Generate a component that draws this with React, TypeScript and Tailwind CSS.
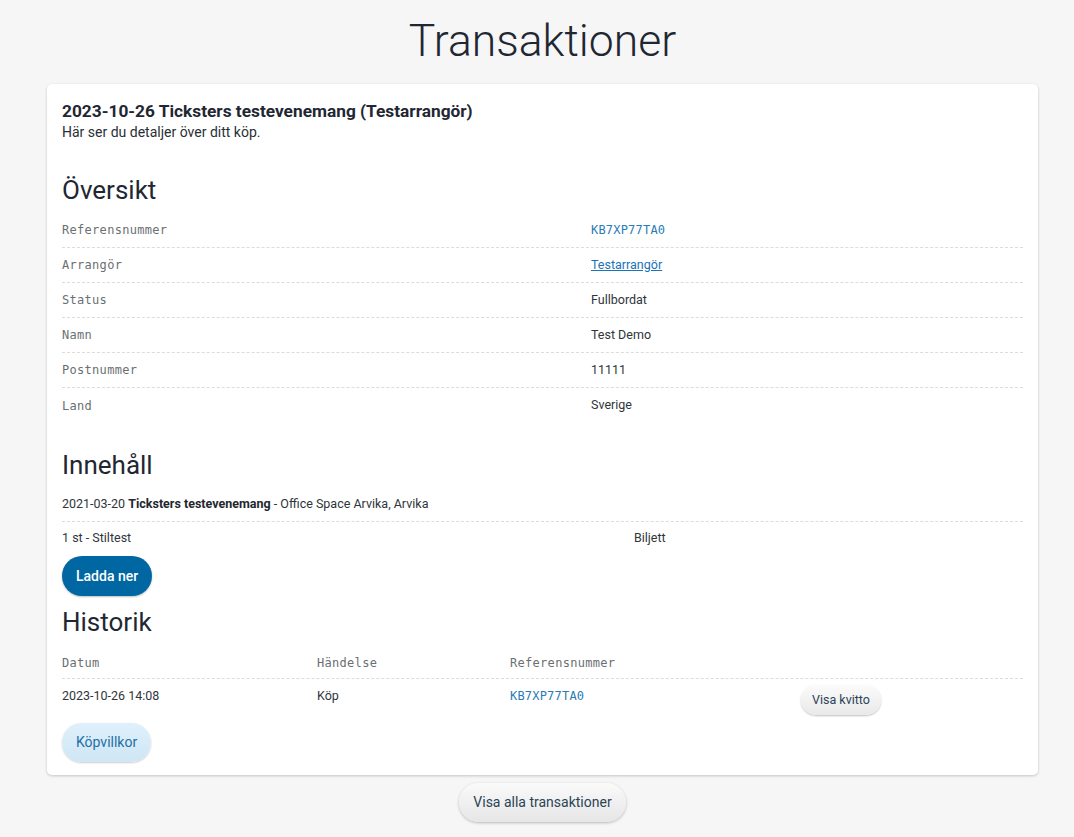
import React from 'react';

const body = "text-[12.5px] text-[#30353b]";
const mono = "font-['DejaVu_Sans_Mono',monospace] text-[12px] tracking-[0.3px] text-[#6b6f73]";
const refNo = "font-['DejaVu_Sans_Mono',monospace] text-[12px] tracking-[0.2px] text-[#2b7cb5]";

const rows: { label: string; value: React.ReactNode }[] = [
  { label: 'Referensnummer', value: <span className={refNo}>KB7XP77TA0</span> },
  { label: 'Arrangör', value: <a className="text-[#1a73b5] underline">Testarrangör</a> },
  { label: 'Status', value: 'Fullbordat' },
  { label: 'Namn', value: 'Test Demo' },
  { label: 'Postnummer', value: '11111' },
  { label: 'Land', value: 'Sverige' },
];

export default function App() {
  return (
    <div className="min-h-[837px] bg-[#f6f6f6] font-['Roboto',sans-serif] text-[#22272e]">
      <div className="ml-[47px] mr-[36px]">
        <h1 className="pt-[9px] text-center text-[44.5px] font-light leading-[64px] text-[#1f2733]">Transaktioner</h1>

        <div className="mt-[11px] rounded-[5px] bg-white px-[15px] pt-[16px] pb-[13px] shadow-[0_1px_3px_rgba(0,0,0,0.2)]">
          <h2 className="text-[17.3px] font-bold leading-[22px] text-[#1f2733]">2023-10-26 Ticksters testevenemang (Testarrangör)</h2>
          <p className="text-[14px] leading-[20px] text-[#2a2f35]">Här ser du detaljer över ditt köp.</p>

          <h3 className="mt-[32px] text-[26px] font-normal leading-[32px] text-[#1f2733]">Översikt</h3>
          <div className="mt-[7px]">
            {rows.map((r, i) => (
              <div key={i} className={`flex h-[35px] items-center ${i < rows.length - 1 ? 'border-b border-dashed border-[#dcdcdc]' : ''}`}>
                <div className={`w-[529px] ${mono}`}>{r.label}</div>
                <div className={body}>{r.value}</div>
              </div>
            ))}
          </div>

          <h3 className="mt-[26px] text-[26px] font-normal leading-[32px] text-[#1f2733]">Innehåll</h3>
          <div className={`mt-[7px] flex h-[34px] items-center border-b border-dashed border-[#dcdcdc] ${body}`}>
            <span>2021-03-20&nbsp;<b className="font-bold text-[#22272e]">Ticksters testevenemang</b> - Office Space Arvika, Arvika</span>
          </div>
          <div className={`flex h-[32px] items-center ${body}`}>
            <div className="w-[572px]">1 st - Stiltest</div>
            <div>Biljett</div>
          </div>
          <button className="mt-[2px] h-[40px] rounded-full bg-[#0067a3] px-[14px] text-[14px] font-medium text-white shadow-[0_1px_2px_rgba(0,0,0,0.25)]">Ladda ner</button>

          <h3 className="mt-[10px] text-[26px] font-normal leading-[32px] text-[#1f2733]">Historik</h3>
          <div className="mt-[10px]">
            <div className={`flex h-[31px] items-center border-b border-dashed border-[#dcdcdc] ${mono}`}>
              <div className="w-[255px]">Datum</div>
              <div className="w-[193px]">Händelse</div>
              <div className="w-[291px]">Referensnummer</div>
              <div></div>
            </div>
            <div className={`flex h-[40px] items-start pt-[8px] ${body}`}>
              <div className="w-[255px]">2023-10-26 14:08</div>
              <div className="w-[193px]">Köp</div>
              <div className={`w-[291px] ${refNo}`}>KB7XP77TA0</div>
              <div>
                <button className="-mt-[2px] h-[30px] rounded-full bg-gradient-to-b from-[#fbfbfb] to-[#e9e9e9] px-[11px] text-[12.5px] text-[#2c4356] shadow-[0_1px_2px_rgba(0,0,0,0.25)]">Visa kvitto</button>
              </div>
            </div>
          </div>
          <button className="mt-[4px] h-[39px] rounded-full bg-gradient-to-b from-[#dff0fb] to-[#cfe6f5] px-[14px] text-[14px] text-[#1f6fa5] shadow-[0_1px_2px_rgba(0,0,0,0.2)]">Köpvillkor</button>
        </div>

        <div className="mt-[8px] flex justify-center">
          <button className="h-[39px] rounded-full bg-gradient-to-b from-[#fafafa] to-[#e6e6e6] px-[14px] text-[14px] text-[#2c4356] shadow-[0_1px_3px_rgba(0,0,0,0.25)]">Visa alla transaktioner</button>
        </div>
      </div>
    </div>
  );
}
